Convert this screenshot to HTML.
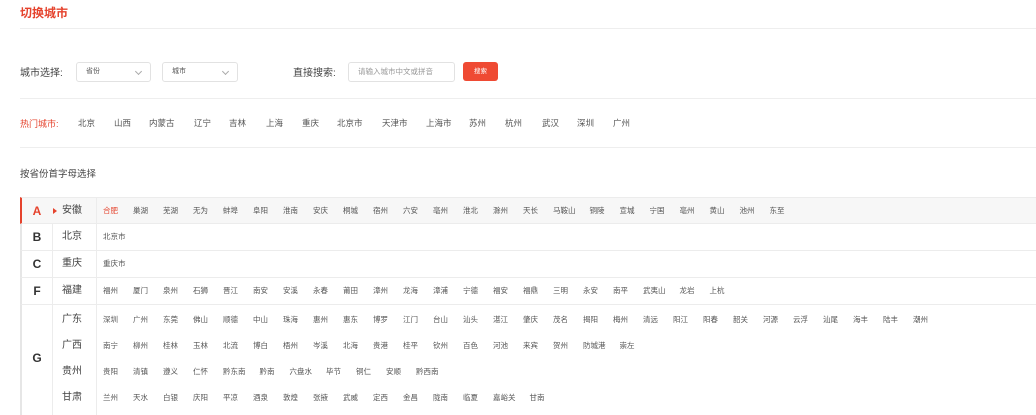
<!DOCTYPE html>
<html><head><meta charset="utf-8"><style>
*{margin:0;padding:0;box-sizing:border-box}
body{width:1036px;height:400px;overflow:hidden;background:#fff;font-family:"Liberation Sans","Noto Sans CJK SC",sans-serif;color:#333;position:relative}
.a{position:absolute}
.hl{position:absolute;left:20px;right:0;height:1px;background:#eeeeee}
.title{left:20px;top:4px;font-size:12px;font-weight:bold;color:#e5432d}
.lbl{font-size:10px;color:#444}
.sel{border:1px solid #e2e2e2;border-radius:3px;height:20px;font-size:7px;color:#555;padding-left:9px;line-height:18px}
.sel i{position:absolute;right:9px;top:6px;width:5px;height:5px;border-right:1px solid #aaa;border-bottom:1px solid #aaa;transform:rotate(45deg)}
.hot span{position:absolute;top:0;font-size:8.5px;color:#555;white-space:nowrap}
.row{position:absolute;left:20px;right:0;border-left:2px solid #e6e6e6;border-bottom:1px solid #ececec}
.row .L{position:absolute;left:0;width:30px;text-align:center;font-size:12px;font-weight:bold;color:#333;line-height:14px}
.row .P{position:absolute;left:40px;font-size:10px;color:#444;line-height:12px}
.row .vl{position:absolute;left:74px;top:0;bottom:0;width:1px;background:#ececec}
.row .C{position:absolute;left:81px;display:flex;font-size:7.5px;color:#555;white-space:nowrap;line-height:10px}
.row .C span{margin-right:14px;display:inline-block;min-width:16px}
.vl2{position:absolute;left:30px;top:0;bottom:0;width:1px;background:#ececec}
</style></head><body>
<div class="a title">切换城市</div>
<div class="hl" style="top:28px"></div>
<div class="a lbl" style="left:20px;top:64px">城市选择:</div>
<div class="a sel" style="left:76px;top:62px;width:75px">省份<i></i></div>
<div class="a sel" style="left:162px;top:62px;width:76px">城市<i></i></div>
<div class="a lbl" style="left:293px;top:64px">直接搜索:</div>
<div class="a sel" style="left:348px;top:62px;width:107px;color:#999;font-size:7.5px">请输入城市中文或拼音</div>
<div class="a" style="left:463px;top:62px;width:35px;height:19px;background:#ef4a33;border-radius:3px;color:#fff;font-size:6.5px;text-align:center;line-height:19px">搜索</div>
<div class="hl" style="top:98px"></div>
<div class="a hot" style="left:0;top:117px;width:1036px;height:14px">
<span style="left:20px;color:#e5432d;font-size:9px">热门城市:</span>
<span style="left:78px">北京</span><span style="left:114px">山西</span><span style="left:149px">内蒙古</span><span style="left:194px">辽宁</span><span style="left:229px">吉林</span><span style="left:266px">上海</span><span style="left:302px">重庆</span><span style="left:337px">北京市</span><span style="left:382px">天津市</span><span style="left:426px">上海市</span><span style="left:469px">苏州</span><span style="left:505px">杭州</span><span style="left:542px">武汉</span><span style="left:577px">深圳</span><span style="left:613px">广州</span>
</div>
<div class="hl" style="top:147px"></div>
<div class="a" style="left:20px;top:166px;font-size:9.5px;color:#444">按省份首字母选择</div>

<div class="row" style="top:197px;height:27px;background:#f7f7f7;border-left-color:#e5432d;border-top:1px solid #ececec">
<div class="L" style="top:6px;color:#e5432d">A</div>
<div class="a" style="left:31px;top:10px;width:0;height:0;border-left:4px solid #e5432d;border-top:3px solid transparent;border-bottom:3px solid transparent"></div>
<div class="P" style="top:7px">安徽</div><div class="vl"></div>
<div class="C" style="top:8px"><span style="color:#e5432d">合肥</span><span>巢湖</span><span>芜湖</span><span>无为</span><span>蚌埠</span><span>阜阳</span><span>淮南</span><span>安庆</span><span>桐城</span><span>宿州</span><span>六安</span><span>亳州</span><span>淮北</span><span>滁州</span><span>天长</span><span>马鞍山</span><span>铜陵</span><span>宣城</span><span>宁国</span><span>亳州</span><span>黄山</span><span>池州</span><span>东至</span></div>
</div>
<div class="row" style="top:224px;height:27px"><div class="vl2"></div>
<div class="L" style="top:6px">B</div><div class="P" style="top:7px">北京</div><div class="vl"></div>
<div class="C" style="top:8px"><span>北京市</span></div></div>
<div class="row" style="top:251px;height:27px"><div class="vl2"></div>
<div class="L" style="top:6px">C</div><div class="P" style="top:7px">重庆</div><div class="vl"></div>
<div class="C" style="top:8px"><span>重庆市</span></div></div>
<div class="row" style="top:278px;height:27px"><div class="vl2"></div>
<div class="L" style="top:6px">F</div><div class="P" style="top:7px">福建</div><div class="vl"></div>
<div class="C" style="top:8px"><span>福州</span><span>厦门</span><span>泉州</span><span>石狮</span><span>晋江</span><span>南安</span><span>安溪</span><span>永春</span><span>莆田</span><span>漳州</span><span>龙海</span><span>漳浦</span><span>宁德</span><span>福安</span><span>福鼎</span><span>三明</span><span>永安</span><span>南平</span><span>武夷山</span><span>龙岩</span><span>上杭</span></div></div>
<div class="row" style="top:305px;height:110px;border-bottom:none"><div class="vl2"></div>
<div class="L" style="top:46px">G</div>
<div class="P" style="top:9px">广东</div><div class="P" style="top:35px">广西</div><div class="P" style="top:61px">贵州</div><div class="P" style="top:87px">甘肃</div>
<div class="vl"></div>
<div class="C" style="top:10px"><span>深圳</span><span>广州</span><span>东莞</span><span>佛山</span><span>顺德</span><span>中山</span><span>珠海</span><span>惠州</span><span>惠东</span><span>博罗</span><span>江门</span><span>台山</span><span>汕头</span><span>湛江</span><span>肇庆</span><span>茂名</span><span>揭阳</span><span>梅州</span><span>清远</span><span>阳江</span><span>阳春</span><span>韶关</span><span>河源</span><span>云浮</span><span>汕尾</span><span>海丰</span><span>陆丰</span><span>潮州</span></div>
<div class="C" style="top:36px"><span>南宁</span><span>柳州</span><span>桂林</span><span>玉林</span><span>北流</span><span>博白</span><span>梧州</span><span>岑溪</span><span>北海</span><span>贵港</span><span>桂平</span><span>钦州</span><span>百色</span><span>河池</span><span>来宾</span><span>贺州</span><span>防城港</span><span>崇左</span></div>
<div class="C" style="top:62px"><span>贵阳</span><span>清镇</span><span>遵义</span><span>仁怀</span><span>黔东南</span><span>黔南</span><span>六盘水</span><span>毕节</span><span>铜仁</span><span>安顺</span><span>黔西南</span></div>
<div class="C" style="top:88px"><span>兰州</span><span>天水</span><span>白银</span><span>庆阳</span><span>平凉</span><span>酒泉</span><span>敦煌</span><span>张掖</span><span>武威</span><span>定西</span><span>金昌</span><span>陇南</span><span>临夏</span><span>嘉峪关</span><span>甘南</span></div>
</div>
</body></html>
